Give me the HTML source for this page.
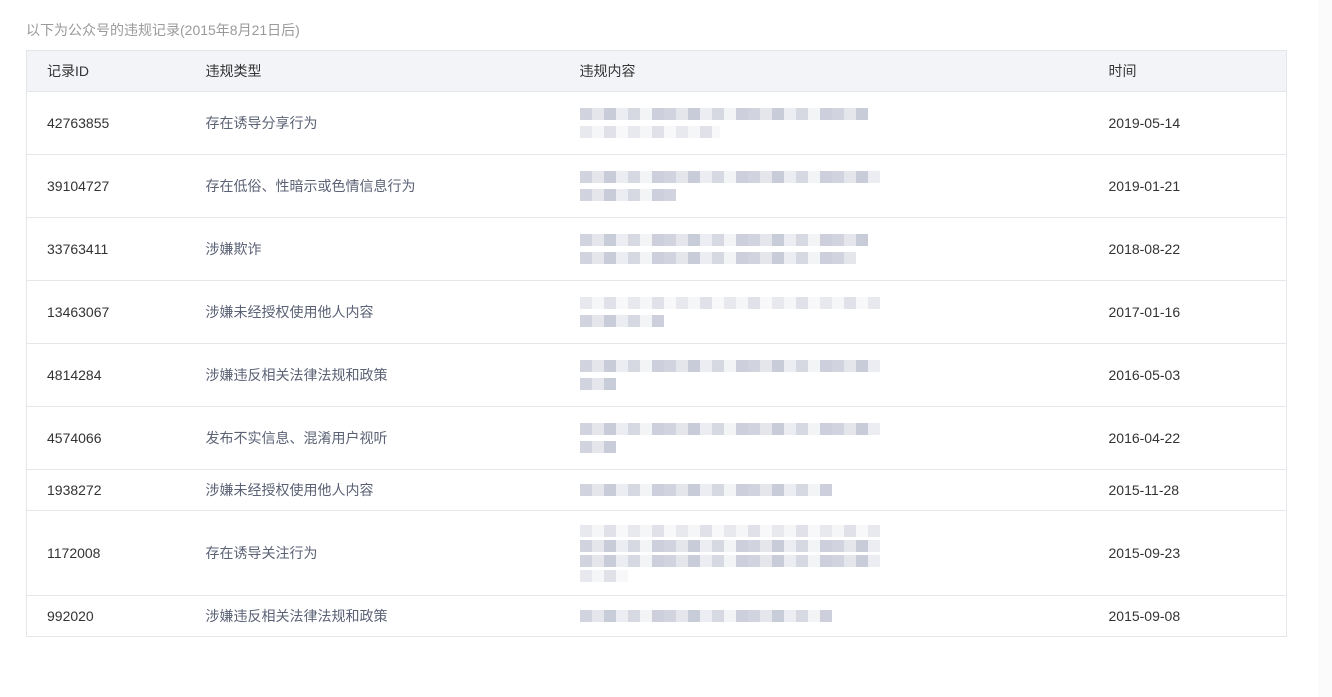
<!DOCTYPE html>
<html><head><meta charset="utf-8"><style>
body{margin:0;width:1332px;height:697px;background:#fff;font-family:"Liberation Sans","Noto Sans CJK SC",sans-serif;font-size:14px;position:relative;overflow:hidden}
.t{position:absolute;left:26px;top:20px;color:#9a9a9a;font-size:14px}
table{position:absolute;left:26px;top:50px;width:1261px;border-collapse:collapse;border:1px solid #e4e6ea;table-layout:fixed}
td,th{border-top:1px solid #e4e6ea;padding:0;text-align:left;font-weight:normal;vertical-align:middle}
th{height:40px;background:#f3f4f7;color:#353535}
td{color:#333}
td.k{color:#5b6275}
.c1{padding-left:20px}
.b{height:12px;margin:6px 0;opacity:.85;background:repeating-linear-gradient(90deg,#c9ccd9 0 12px,#dfe1e9 12px 24px,#bfc3d2 24px 36px,#e9eaf0 36px 48px,#cfd2dd 48px 60px,#f1f2f5 60px 72px,#c4c8d6 72px 84px)}
.l{background:repeating-linear-gradient(90deg,#e3e5ec 0 12px,#f3f4f7 12px 24px,#dadce5 24px 36px,#f7f7f9 36px 48px)}
.sb{position:absolute;right:0;top:0;width:14px;height:697px;background:#fbfbfb}
</style></head><body>
<div class="t">以下为公众号的违规记录(2015年8月21日后)</div>
<table>
<colgroup><col style="width:179px"><col style="width:374px"><col style="width:529px"><col></colgroup>
<tr><th class="c1">记录ID</th><th>违规类型</th><th>违规内容</th><th>时间</th></tr>
<tr style="height:63px"><td class="c1">42763855</td><td class="k">存在诱导分享行为</td><td><div class="b" style="width:288px"></div><div class="b l" style="width:140px"></div></td><td>2019-05-14</td></tr>
<tr style="height:63px"><td class="c1">39104727</td><td class="k">存在低俗、性暗示或色情信息行为</td><td><div class="b" style="width:300px"></div><div class="b" style="width:96px"></div></td><td>2019-01-21</td></tr>
<tr style="height:63px"><td class="c1">33763411</td><td class="k">涉嫌欺诈</td><td><div class="b" style="width:288px"></div><div class="b" style="width:276px"></div></td><td>2018-08-22</td></tr>
<tr style="height:63px"><td class="c1">13463067</td><td class="k">涉嫌未经授权使用他人内容</td><td><div class="b l" style="width:300px"></div><div class="b" style="width:84px"></div></td><td>2017-01-16</td></tr>
<tr style="height:63px"><td class="c1">4814284</td><td class="k">涉嫌违反相关法律法规和政策</td><td><div class="b" style="width:300px"></div><div class="b" style="width:36px"></div></td><td>2016-05-03</td></tr>
<tr style="height:63px"><td class="c1">4574066</td><td class="k">发布不实信息、混淆用户视听</td><td><div class="b" style="width:300px"></div><div class="b" style="width:36px"></div></td><td>2016-04-22</td></tr>
<tr style="height:41px"><td class="c1">1938272</td><td class="k">涉嫌未经授权使用他人内容</td><td><div class="b" style="width:252px"></div></td><td>2015-11-28</td></tr>
<tr style="height:85px"><td class="c1">1172008</td><td class="k">存在诱导关注行为</td><td><div class="b l" style="width:300px;margin:3px 0"></div><div class="b" style="width:300px;margin:3px 0"></div><div class="b" style="width:300px;margin:3px 0"></div><div class="b l" style="width:48px;margin:3px 0"></div></td><td>2015-09-23</td></tr>
<tr style="height:41px"><td class="c1">992020</td><td class="k">涉嫌违反相关法律法规和政策</td><td><div class="b" style="width:252px"></div></td><td>2015-09-08</td></tr>
</table>
<div class="sb"></div>
</body></html>
